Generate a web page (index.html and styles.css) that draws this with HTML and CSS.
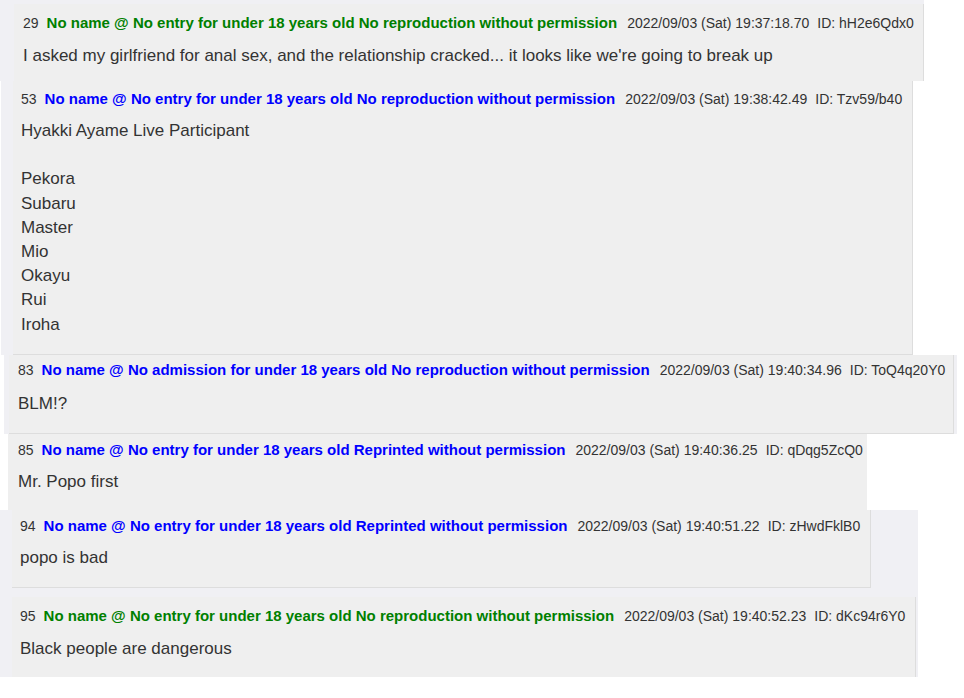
FILE: index.html
```html
<!DOCTYPE html>
<html>
<head>
<meta charset="utf-8">
<link rel="stylesheet" href="styles.css">
</head>
<body>
<div class="strip s1">
  <div class="post">
    <div class="meta"><span class="num">29</span><span class="name green">No name @ No entry for under 18 years old No reproduction without permission</span><span class="date">2022/09/03 (Sat) 19:37:18.70</span><span class="uid">ID: hH2e6Qdx0</span></div>
    <div class="msg">I asked my girlfriend for anal sex, and the relationship cracked... it looks like we're going to break up</div>
  </div>
</div>
<div class="strip s2">
  <div class="post">
    <div class="meta"><span class="num">53</span><span class="name blue">No name @ No entry for under 18 years old No reproduction without permission</span><span class="date">2022/09/03 (Sat) 19:38:42.49</span><span class="uid">ID: Tzv59/b40</span></div>
    <div class="msg">Hyakki Ayame Live Participant<br><br>Pekora<br>Subaru<br>Master<br>Mio<br>Okayu<br>Rui<br>Iroha</div>
  </div>
</div>
<div class="strip s3">
  <div class="post">
    <div class="meta"><span class="num">83</span><span class="name blue">No name @ No admission for under 18 years old No reproduction without permission</span><span class="date">2022/09/03 (Sat) 19:40:34.96</span><span class="uid">ID: ToQ4q20Y0</span></div>
    <div class="msg">BLM!?</div>
  </div>
</div>
<div class="strip s4">
  <div class="post">
    <div class="meta"><span class="num">85</span><span class="name blue">No name @ No entry for under 18 years old Reprinted without permission</span><span class="date">2022/09/03 (Sat) 19:40:36.25</span><span class="uid">ID: qDqg5ZcQ0</span></div>
    <div class="msg">Mr. Popo first</div>
  </div>
</div>
<div class="strip s5">
  <div class="post">
    <div class="meta"><span class="num">94</span><span class="name blue">No name @ No entry for under 18 years old Reprinted without permission</span><span class="date">2022/09/03 (Sat) 19:40:51.22</span><span class="uid">ID: zHwdFklB0</span></div>
    <div class="msg">popo is bad</div>
  </div>
</div>
<div class="strip s6">
  <div class="post">
    <div class="meta"><span class="num">95</span><span class="name green">No name @ No entry for under 18 years old No reproduction without permission</span><span class="date">2022/09/03 (Sat) 19:40:52.23</span><span class="uid">ID: dKc94r6Y0</span></div>
    <div class="msg">Black people are dangerous</div>
  </div>
</div>
</body>
</html>
```

FILE: styles.css
```css
html, body {
  margin: 0;
  padding: 0;
  background: #ffffff;
}
body {
  font-family: "Liberation Sans", Arial, sans-serif;
  color: #333333;
  width: 964px;
  height: 698px;
  overflow: hidden;
}
.strip {
  box-sizing: border-box;
  display: flex;
}
.post {
  box-sizing: border-box;
  background: #efefef;
  padding-left: 9px;
  flex: 1;
}
.meta {
  display: flex;
  align-items: baseline;
  white-space: nowrap;
  font-size: 14px;
  line-height: 18px;
}
.num {
  font-size: 14px;
  color: #333;
}
.name {
  font-weight: bold;
  font-size: 15px;
  margin-left: 8px;
}
.green { color: #008000; }
.blue { color: #0000ff; }
.date {
  margin-left: 10px;
}
.uid {
  margin-left: 8px;
}
.msg {
  font-size: 17px;
  line-height: 24.2px;
}

/* strip 1 */
.s1 {
  width: 924px;
  height: 81px;
  background: #f0f0f4;
  padding: 4px 0 0 14px;
}
.s1 .post {
  border-right: 1px solid #dddddd;
  padding-top: 10px;
}
.s1 .msg { margin-top: 12px; }

/* strip 2 */
.s2 {
  width: 912px;
  height: 274px;
  background: #f0f0f4;
  margin-left: 1px;
  padding-left: 12px;
}
.s2 .post {
  padding-left: 8px;
  padding-top: 9px;
  border-right: 1px solid #dddddd;
  border-bottom: 1px solid #dddddd;
}
.s2 .msg { margin-top: 11px; }

/* strip 3 */
.s3 {
  width: 953px;
  height: 79px;
  background: #f0f0f4;
  margin-left: 4px;
  padding-left: 5px;
  padding-right: 3px;
}
.s3 .post {
  padding-top: 6px;
  border-right: 1px solid #dddddd;
  border-bottom: 1px solid #dddddd;
}
.s3 .msg { margin-top: 13px; }

/* strip 4 */
.s4 {
  width: 859px;
  height: 76px;
  margin-left: 8px;
}
.s4 .post {
  padding-left: 10px;
  padding-top: 7px;
}
.s4 .msg { margin-top: 11px; }

/* strip 5 */
.s5 {
  width: 918px;
  height: 80px;
  background: #f0f0f4;
  padding: 0 47px 2px 12px;
}
.s5 .post {
  padding-left: 8px;
  padding-top: 7px;
  border-right: 1px solid #dddddd;
  border-bottom: 1px solid #dddddd;
}
.s5 .msg { margin-top: 11px; }

/* strip 6 */
.s6 {
  width: 918px;
  height: 87px;
  background: #f0f0f4;
  padding: 7px 2px 0 12px;
}
.s6 .post {
  padding-left: 8px;
  padding-top: 10px;
  border-right: 1px solid #dddddd;
}
.s6 .msg { margin-top: 12px; }
```
